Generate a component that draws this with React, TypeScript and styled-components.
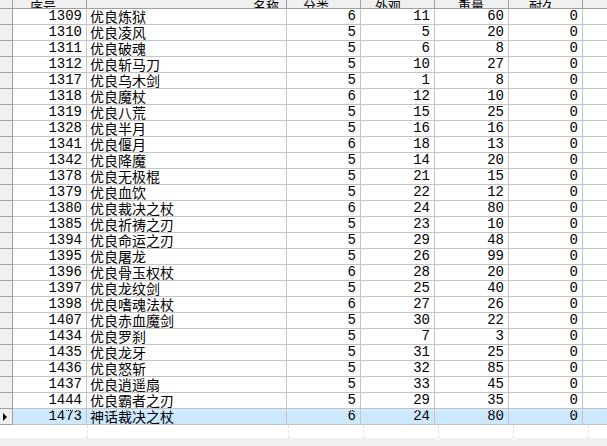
import React from "react";
import styled, { createGlobalStyle, css } from "styled-components";

const GlobalStyle = createGlobalStyle`
  html, body { margin: 0; padding: 0; background: #f0f0f0; }
  body { font-family: "Noto Sans CJK SC", "Liberation Sans", sans-serif; }
`;

type Align = "left" | "right" | "center";

interface Col {
  title: string;
  width: number;
  align: Align;
  headerPad: number;
  mono: boolean;
}

const cols: Col[] = [
  { title: "序号", width: 75, align: "right", headerPad: 17, mono: true },
  { title: "名称", width: 201, align: "left", headerPad: 166, mono: false },
  { title: "分类", width: 75, align: "right", headerPad: 16, mono: true },
  { title: "外观", width: 75, align: "right", headerPad: 14, mono: true },
  { title: "重量", width: 75, align: "right", headerPad: 23, mono: true },
  { title: "耐久", width: 75, align: "right", headerPad: 20, mono: true },
];

const rows: (string | number)[][] = [
  [1309, "优良炼狱", 6, 11, 60, 0],
  [1310, "优良凌风", 5, 5, 20, 0],
  [1311, "优良破魂", 5, 6, 8, 0],
  [1312, "优良斩马刀", 5, 10, 27, 0],
  [1317, "优良乌木剑", 5, 1, 8, 0],
  [1318, "优良魔杖", 6, 12, 10, 0],
  [1319, "优良八荒", 5, 15, 25, 0],
  [1328, "优良半月", 5, 16, 16, 0],
  [1341, "优良偃月", 6, 18, 13, 0],
  [1342, "优良降魔", 5, 14, 20, 0],
  [1378, "优良无极棍", 5, 21, 15, 0],
  [1379, "优良血饮", 5, 22, 12, 0],
  [1380, "优良裁决之杖", 6, 24, 80, 0],
  [1385, "优良祈祷之刃", 5, 23, 10, 0],
  [1394, "优良命运之刃", 5, 29, 48, 0],
  [1395, "优良屠龙", 5, 26, 99, 0],
  [1396, "优良骨玉权杖", 6, 28, 20, 0],
  [1397, "优良龙纹剑", 5, 25, 40, 0],
  [1398, "优良嗜魂法杖", 6, 27, 26, 0],
  [1407, "优良赤血魔剑", 5, 30, 22, 0],
  [1434, "优良罗刹", 5, 7, 3, 0],
  [1435, "优良龙牙", 5, 31, 25, 0],
  [1436, "优良怒斩", 5, 32, 85, 0],
  [1437, "优良逍遥扇", 5, 33, 45, 0],
  [1444, "优良霸者之刃", 5, 29, 35, 0],
  [1473, "神话裁决之杖", 6, 24, 80, 0],
];

const SELECTED = 25;
const GRID = "#c4c4c4";
const HEAD_LINE = "#a0a0a0";

const Grid = styled.div`
  width: 607px;
  height: 438px;
  background: #ffffff;
  overflow: hidden;
  display: flex;
  flex-direction: column;
`;

const Row = styled.div<{ $h: number }>`
  display: flex;
  height: ${(p) => p.$h}px;
  flex: none;
`;

const Corner = styled.div`
  width: 12px;
  flex: none;
  background: #f0f0f0;
  border-right: 1px solid ${HEAD_LINE};
  border-bottom: 1px solid ${HEAD_LINE};
`;

const HeaderCell = styled.div<{ $w: number; $pad: number }>`
  width: ${(p) => p.$w - 1}px;
  flex: none;
  background: #f0f0f0;
  border-right: 1px solid ${HEAD_LINE};
  border-bottom: 1px solid ${HEAD_LINE};
  overflow: hidden;
  display: flex;
  align-items: flex-end;
  padding-left: ${(p) => p.$pad}px;
  box-sizing: border-box;
  font-size: 13px;
  line-height: 14px;
  color: #000;
  white-space: nowrap;
`;

const HeaderLabel = styled.span`
  display: block;
  flex: none;
  margin-bottom: -5px;
`;

const HeaderRest = styled.div`
  flex: 1;
  background: #f0f0f0;
  border-bottom: 1px solid ${HEAD_LINE};
`;

const RowHeader = styled.div`
  width: 12px;
  flex: none;
  background: #f0f0f0;
  border-right: 1px solid ${HEAD_LINE};
  border-bottom: 1px solid ${HEAD_LINE};
  display: flex;
  align-items: center;
  justify-content: center;
`;

const Arrow = styled.span`
  width: 0;
  height: 0;
  border-top: 4px solid transparent;
  border-bottom: 4px solid transparent;
  border-left: 4px solid #000;
  margin-left: -2px;
`;

const Cell = styled.div<{ $w: number; $align: Align; $mono: boolean; $sel: boolean }>`
  width: ${(p) => p.$w - 1}px;
  flex: none;
  box-sizing: border-box;
  border-right: 1px solid ${GRID};
  border-bottom: 1px solid ${GRID};
  display: flex;
  align-items: center;
  justify-content: ${(p) => (p.$align === "right" ? "flex-end" : "flex-start")};
  padding: ${(p) => (p.$align === "right" ? "0 4px 0 0" : "0 0 0 3px")};
  font-family: ${(p) =>
    p.$mono
      ? `"Liberation Mono", "DejaVu Sans Mono", monospace`
      : `"Noto Sans CJK SC", sans-serif`};
  font-size: 14px;
  line-height: 15px;
  color: #000;
  white-space: nowrap;
  overflow: hidden;
  position: relative;
  ${(p) =>
    p.$sel &&
    css`
      background: #cce8ff;
      &::before {
        content: "";
        position: absolute;
        left: 0;
        right: -1px;
        top: 1px;
        height: 1px;
        background: repeating-linear-gradient(90deg, #ffffff 0 1px, transparent 1px 2px);
        opacity: 0.8;
      }
    `}
`;

const RestCell = styled.div<{ $sel: boolean }>`
  flex: 1;
  border-bottom: 1px solid ${GRID};
  position: relative;
  ${(p) =>
    p.$sel &&
    css`
      background: #cce8ff;
      &::before {
        content: "";
        position: absolute;
        left: 0;
        right: 0;
        top: 1px;
        height: 1px;
        background: repeating-linear-gradient(90deg, #ffffff 0 1px, transparent 1px 2px);
        opacity: 0.8;
      }
    `}
`;

const FillerHead = styled.div`
  width: 13px;
  flex: none;
`;

const FillerCell = styled.div<{ $w: number }>`
  width: ${(p) => p.$w}px;
  flex: none;
  box-sizing: border-box;
  border-right: 1px dashed #e2e2e2;
`;

export default function App() {
  return (
    <>
      <GlobalStyle />
      <Grid>
        <Row $h={9}>
          <Corner />
          {cols.map((c) => (
            <HeaderCell key={c.title} $w={c.width} $pad={c.headerPad}>
              <HeaderLabel>{c.title}</HeaderLabel>
            </HeaderCell>
          ))}
          <HeaderRest />
        </Row>
        {rows.map((r, i) => {
          const sel = i === SELECTED;
          return (
            <Row $h={16} key={i}>
              <RowHeader>{sel && <Arrow />}</RowHeader>
              {cols.map((c, j) => (
                <Cell key={j} $w={c.width} $align={c.align} $mono={c.mono} $sel={sel}>
                  {r[j]}
                </Cell>
              ))}
              <RestCell $sel={sel} />
            </Row>
          );
        })}
        <Row $h={13}>
          <FillerHead />
          {cols.map((c, j) => (
            <FillerCell key={j} $w={c.width} />
          ))}
        </Row>
      </Grid>
    </>
  );
}
